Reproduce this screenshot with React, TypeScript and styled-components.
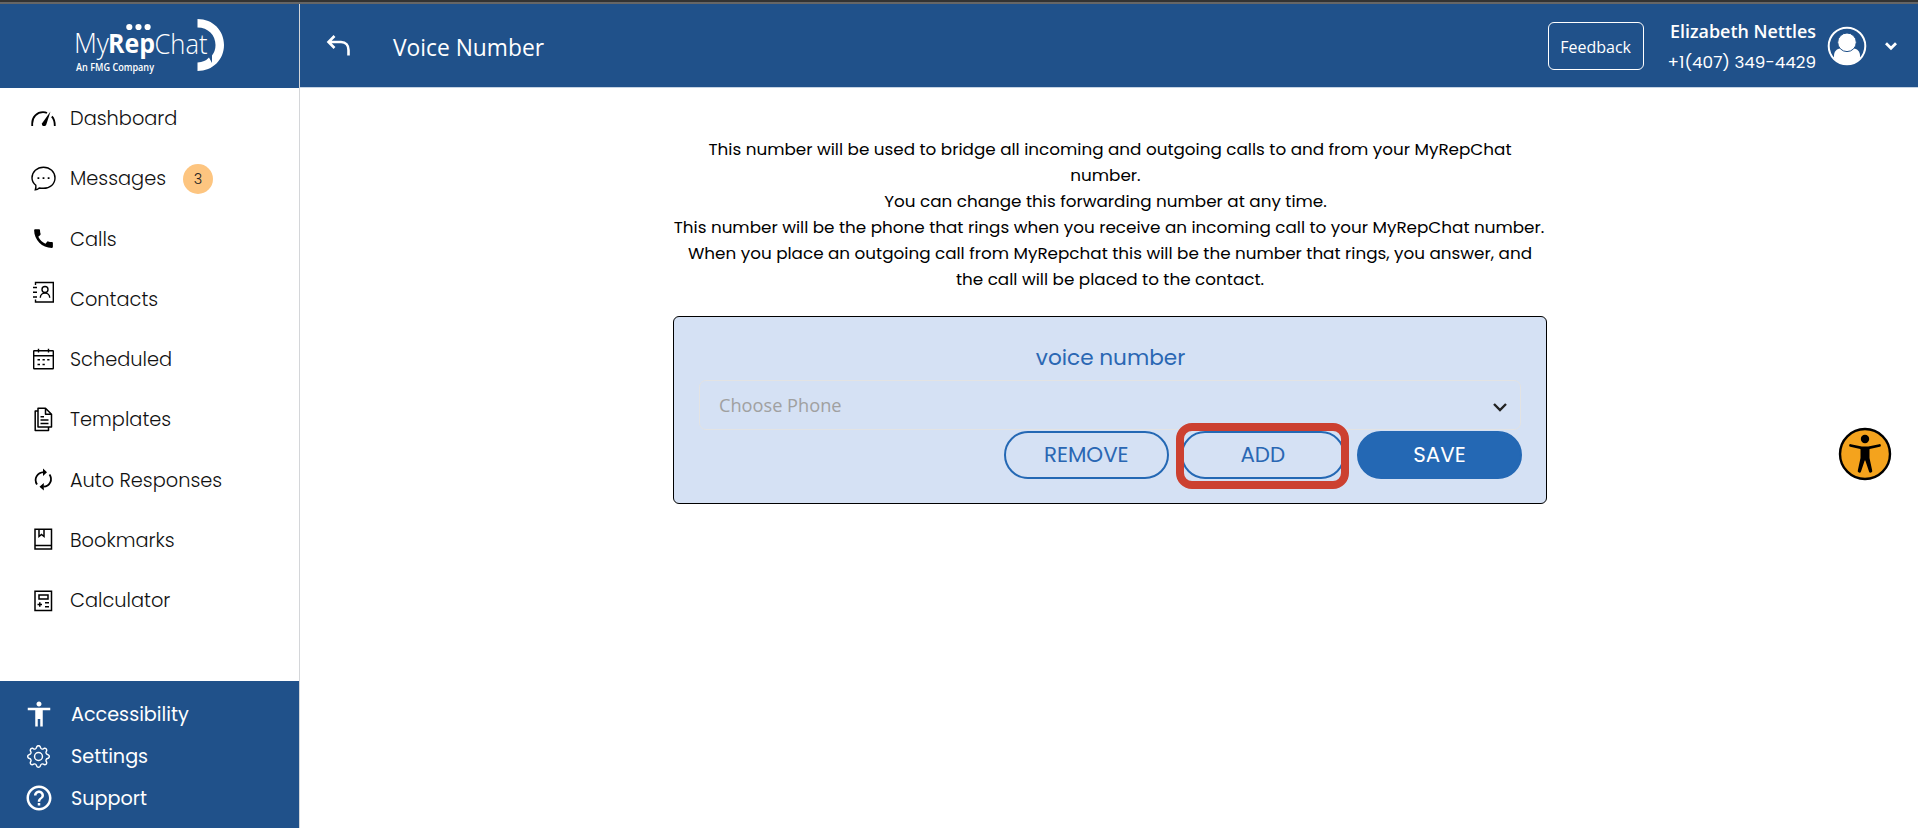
import React, { useState } from "react";
import styled, { createGlobalStyle } from "styled-components";
import { MdAccessibility, MdCall, MdHelpOutline } from "react-icons/md";
import { BsGear } from "react-icons/bs";

const geometric = `"Poppins", "Inter", sans-serif`;
const humanist = `"Segoe UI", "Open Sans", sans-serif`;

const GlobalStyle = createGlobalStyle`
    * {
        box-sizing: border-box;
    }

    body {
        margin: 0;
        background: #fff;
        font-family: ${geometric};
        overflow: hidden;
    }
`;

const Page = styled.div`
    display: flex;
    flex-direction: column;
    height: 100vh;
    border-top: 2px solid #333;
`;

const Body = styled.div`
    display: flex;
    flex: 1;
    min-height: 0;
    border-top: 2px solid #666;
`;

const Sidebar = styled.aside`
    display: flex;
    flex-direction: column;
    width: 300px;
    flex-shrink: 0;
    border-right: 1px solid #d4d6d9;
`;

const LogoWrapper = styled.div`
    height: 84px;
    background: #20518a;
`;

const Nav = styled.nav`
    display: flex;
    flex-direction: column;
    flex: 1;
`;

const NavItem = styled.a`
    display: flex;
    align-items: center;
    height: 60.25px;
    padding-left: 31px;
    color: #111;
    cursor: pointer;
`;

const NavIcon = styled.span<{ $raise?: number }>`
    display: flex;
    width: 25px;
    height: 25px;
    margin-right: 14px;
    margin-top: ${({ $raise }) => ($raise ? -$raise * 2 : 0)}px;
    color: #000;
`;

const NavLabel = styled.span`
    margin-top: 2px;
    font-size: 19.35px;
    font-weight: 300;
    line-height: 28px;
`;

const Badge = styled.span`
    display: flex;
    align-items: center;
    justify-content: center;
    width: 30px;
    height: 30px;
    margin-top: 2px;
    margin-left: 17px;
    border-radius: 50%;
    background: #fdc580;
    color: #222;
    font-size: 14.5px;
    font-weight: 300;
`;

const SidebarFooter = styled.div`
    height: 147px;
    padding: 12px 0 0 26px;
    background: #20518a;
`;

const FooterItem = styled.a`
    display: flex;
    align-items: center;
    height: 42px;
    color: #fff;
    cursor: pointer;
`;

const FooterIcon = styled.span`
    display: flex;
    align-items: center;
    justify-content: center;
    width: 25px;
    height: 30px;
    margin-right: 20px;

    svg {
        flex-shrink: 0;
    }
`;

const FooterLabel = styled.span`
    font-size: 19.2px;
    font-weight: 400;
`;

const Content = styled.div`
    display: flex;
    flex-direction: column;
    flex: 1;
`;

const Header = styled.header`
    display: flex;
    align-items: center;
    height: 84px;
    padding: 0 21px 0 26px;
    border-bottom: 1px solid #c5d3e3;
    background: #20518a;
    color: #fff;
`;

const BackButton = styled.button`
    display: flex;
    width: 26px;
    height: 26px;
    padding: 0;
    margin-right: 41px;
    border: 0;
    background: none;
    color: #fff;
    cursor: pointer;
`;

const Title = styled.h1`
    flex: 1;
    margin: 4px 0 0;
    font-family: ${humanist};
    font-size: 22.8px;
    font-weight: 400;
`;

const FeedbackButton = styled.button`
    width: 96px;
    height: 48px;
    padding: 2px 0 0;
    margin-right: 24px;
    border: 1px solid #fff;
    border-radius: 6px;
    background: none;
    color: #fff;
    font-family: ${humanist};
    font-size: 16px;
    cursor: pointer;
`;

const User = styled.div`
    padding-top: 3px;
    text-align: right;
    white-space: nowrap;
`;

const UserName = styled.div`
    font-family: ${humanist};
    font-size: 17.9px;
    font-weight: 600;
    line-height: 30px;
`;

const UserPhone = styled.div`
    font-size: 16.8px;
    line-height: 32px;
`;

const Avatar = styled.div`
    display: flex;
    width: 40px;
    height: 40px;
    margin-left: 11px;
    margin-right: 18px;
`;

const HeaderChevron = styled.div`
    display: flex;
    width: 12px;
`;

const Main = styled.main`
    display: flex;
    flex-direction: column;
    align-items: center;
    padding: 48px 0 0 2px;
`;

const Description = styled.div`
    width: 874px;
    margin-bottom: 24px;
`;

const DescriptionLine = styled.div<{ $trailing?: number }>`
    padding-right: ${({ $trailing }) => $trailing || 0}px;
    color: #000;
    font-size: 16.8px;
    font-weight: 400;
    line-height: 26px;
    text-align: center;
    white-space: nowrap;
`;

const Card = styled.section`
    width: 874px;
    height: 188px;
    padding: 23px 24px 0 25px;
    border: 1px solid #000;
    border-radius: 6px;
    background: #d5e1f4;
`;

const CardTitle = styled.h2`
    margin: 0 0 4px;
    color: #2a67b3;
    font-size: 21.6px;
    font-weight: 400;
    line-height: 36px;
    text-align: center;
`;

const PhoneSelect = styled.div`
    display: flex;
    align-items: center;
    justify-content: space-between;
    height: 50px;
    padding: 0 13px 0 19px;
    margin-right: 1px;
    border: 1px solid #e3e3e3;
    border-radius: 7px;
    color: #a0a0a0;
    font-family: ${humanist};
    font-size: 18.2px;

    svg {
        margin-top: 4px;
    }
`;

const ButtonRow = styled.div`
    display: flex;
    justify-content: flex-end;
    gap: 12px;
    margin-top: 1px;
`;

const ActionButton = styled.button<{ $filled?: boolean }>`
    width: ${({ $filled }) => ($filled ? 165 : 164.5)}px;
    height: 48px;
    padding: 0 0 1px;
    border: 2px solid #2468b4;
    border-radius: 24px;
    background: ${({ $filled }) => ($filled ? "#2468b4" : "transparent")};
    color: ${({ $filled }) => ($filled ? "#fff" : "#2a67b3")};
    font-family: ${geometric};
    font-size: 21.4px;
    font-weight: 400;
    cursor: pointer;
`;

const Highlighted = styled.div`
    position: relative;
    display: flex;

    &::after {
        content: "";
        position: absolute;
        inset: -8px -4px -10px -5px;
        border: 8px solid #cc4030;
        border-radius: 16px;
        pointer-events: none;
    }
`;

const AccessibilityWidget = styled.button`
    position: fixed;
    right: 26px;
    top: 427px;
    width: 54px;
    height: 54px;
    padding: 0;
    border: 0;
    background: none;
    cursor: pointer;
`;

const Logo: React.FC = () => (
    <svg width="299" height="84" viewBox="0 4 299 84" fill="#fff" fontFamily={humanist}>
        <circle cx="129.3" cy="27" r="3.1" />
        <circle cx="138.5" cy="27" r="3.1" />
        <circle cx="147.6" cy="27" r="3.1" />
        <text x="74" y="53" fontSize="27" fontWeight="300" textLength="35" lengthAdjust="spacingAndGlyphs">My</text>
        <text x="108" y="53" fontSize="27" fontWeight="700" textLength="47" lengthAdjust="spacingAndGlyphs">Rep</text>
        <text x="154.5" y="53.5" fontSize="27" fontWeight="300" textLength="53" lengthAdjust="spacingAndGlyphs">Chat</text>
        <text x="76" y="70.5" fontSize="10" fontWeight="600" textLength="78" lengthAdjust="spacingAndGlyphs">An FMG Company</text>
        <path d="M197.5 19C213 19 224 30.500 224 45C224 59.500 213 71 197.500 71V62.500Q205 62 209 57.500L212 63V55.500Q215.500 51 215.500 45C215.500 35 208 27.500 197.500 27.500Z" />
    </svg>
);

const DashboardIcon = () => (
    <svg width="25" height="25" viewBox="0 0 25 25" fill="none" stroke="currentColor" strokeWidth="1.8">
        <path d="M1.200 20V17.500C1.200 11 6 6.200 12 6.200C13.700 6.200 15 6.500 16 7M20.800 10.500Q23.800 13.500 23.800 20" />
        <path d="M19.500 5.500L15.300 18.600C14.400 21.200 10 20.200 11.100 17.200Z" fill="currentColor" stroke="none" />
    </svg>
);

const MessagesIcon = () => (
    <svg width="25" height="25" viewBox="0 0 25 25" fill="none" stroke="currentColor" strokeWidth="1.400">
        <path d="M4.800 19.200C2.500 17.300 1 14.900 1 12C1 6 6 1.200 12.500 1.200S24 6 24 12S19 22.300 12.500 22.300Q10.300 22.300 8.200 22Q6.500 23.700 4.300 23.800Q5.200 21.800 4.800 19.200Z" />
        <path d="M6.500 12.200H8.300M11.600 12.200H13.400M16.700 12.200H18.500" strokeWidth="1.800" />
    </svg>
);

const ContactsIcon = () => (
    <svg width="25" height="25" viewBox="0 0 25 25" fill="none" stroke="currentColor" strokeWidth="1.400">
        <path d="M4.500 5V2.500H22.300V22H4.500V19.500M2 7.500H6M2 12.200H6M2 17H6" />
        <circle cx="14" cy="9.500" r="3" />
        <path d="M9.300 17.800C9.300 11.500 18.700 11.500 18.700 17.800" />
    </svg>
);

const ScheduledIcon = () => (
    <svg width="25" height="25" viewBox="0 0 25 25" fill="none" stroke="currentColor" strokeWidth="1.400">
        <rect x="2.700" y="3.700" width="19.600" height="18" rx="0.500" />
        <path d="M3 8.700H22M7.500 1.700V5.500M17.500 1.700V5.500" />
        <path d="M6.500 12.800H9M11.500 12.800H13.800M16.200 12.800H18.500M6.500 17.500H9M11.500 17.500H13.800" strokeWidth="1.500" />
    </svg>
);

const TemplatesIcon = () => (
    <svg width="25" height="25" viewBox="0 0 25 25" fill="none" stroke="currentColor" strokeWidth="1.500" strokeLinejoin="round">
        <path d="M7 1.300H14.500L20.500 7.300V20H7ZM14.500 1.500V7.300H20.500M7 4H4.200V23.400H17.500V20M9.500 9.700H13M9.500 13H17.500M9.500 16.500H17.500" />
    </svg>
);

const AutoResponsesIcon = () => (
    <svg width="25" height="25" viewBox="0 0 25 25" fill="none" stroke="currentColor" strokeWidth="1.800">
        <path d="M6 17.500C2.500 12 6 5.500 13 5.200M18.500 7.500C22 12.500 19 19.500 12.500 19.700" />
        <path d="M12 1.500L16 5.200L12 9ZM12.800 16L8.500 19.800L12.800 23.500Z" fill="currentColor" stroke="none" />
    </svg>
);

const BookmarksIcon = () => (
    <svg width="25" height="25" viewBox="0 0 25 25" fill="none" stroke="currentColor" strokeWidth="1.500">
        <path d="M4 2.300H20.500V22H4ZM4 18.500H20.500M8 2.500V9.500L10.500 7.500L13 9.500V2.500" />
    </svg>
);

const CalculatorIcon = () => (
    <svg width="25" height="25" viewBox="0 0 25 25" fill="none" stroke="currentColor" strokeWidth="1.500">
        <path d="M4 3.300H20.500V22.500H4ZM8 7H17V11H8ZM6.500 16.500H11M8.800 14.300V18.700M14 14.700H18M14 18.700H18" />
    </svg>
);

const menuList = [
    { name: "Dashboard", icon: <DashboardIcon /> },
    { name: "Messages", icon: <MessagesIcon />, count: 3 },
    { name: "Calls", icon: <MdCall size={25} /> },
    { name: "Contacts", icon: <ContactsIcon />, raise: 6.5 },
    { name: "Scheduled", icon: <ScheduledIcon /> },
    { name: "Templates", icon: <TemplatesIcon /> },
    { name: "Auto Responses", icon: <AutoResponsesIcon /> },
    { name: "Bookmarks", icon: <BookmarksIcon /> },
    { name: "Calculator", icon: <CalculatorIcon /> },
];

const footerList = [
    { name: "Accessibility", icon: <MdAccessibility size={30} /> },
    { name: "Settings", icon: <BsGear size={23} /> },
    { name: "Support", icon: <MdHelpOutline size={30} /> },
];

const descriptionList = [
    { text: "This number will be used to bridge all incoming and outgoing calls to and from your MyRepChat" },
    { text: "number.", trailing: 9 },
    { text: "You can change this forwarding number at any time.", trailing: 9 },
    { text: "This number will be the phone that rings when you receive an incoming call to your MyRepChat number.", trailing: 2 },
    { text: "When you place an outgoing call from MyRepchat this will be the number that rings, you answer, and" },
    { text: "the call will be placed to the contact." },
];

const App: React.FC = () => {
    const [phone] = useState<string>("");

    return (
        <Page>
            <GlobalStyle />
            <Body>
                <Sidebar>
                    <LogoWrapper>
                        <Logo />
                    </LogoWrapper>
                    <Nav>
                        {menuList.map((menu) => (
                            <NavItem key={menu.name}>
                                <NavIcon $raise={menu.raise}>{menu.icon}</NavIcon>
                                <NavLabel>{menu.name}</NavLabel>
                                {menu.count && <Badge>{menu.count}</Badge>}
                            </NavItem>
                        ))}
                    </Nav>
                    <SidebarFooter>
                        {footerList.map((item) => (
                            <FooterItem key={item.name}>
                                <FooterIcon>{item.icon}</FooterIcon>
                                <FooterLabel>{item.name}</FooterLabel>
                            </FooterItem>
                        ))}
                    </SidebarFooter>
                </Sidebar>
                <Content>
                    <Header>
                        <BackButton aria-label="Back">
                            <svg width="26" height="26" viewBox="0 0 26 26" fill="none" stroke="currentColor" strokeWidth="2.600">
                                <path d="M8.500 3L2.500 9L8.500 15M2.500 9H15C20 9 22.500 12.500 22.500 17V22.500" />
                            </svg>
                        </BackButton>
                        <Title>Voice Number</Title>
                        <FeedbackButton>Feedback</FeedbackButton>
                        <User>
                            <UserName>Elizabeth Nettles</UserName>
                            <UserPhone>+1(407) 349-4429</UserPhone>
                        </User>
                        <Avatar>
                            <svg width="40" height="40" viewBox="0 0 40 40">
                                <circle cx="20" cy="20" r="18.300" fill="none" stroke="#fff" strokeWidth="2" />
                                <path d="M7 32V30C7 25 10 22.500 14 22.500H26C30 22.500 33 25 33 30V32Q27.500 38.500 20 38.500T7 32Z" fill="#fff" />
                                <circle cx="20" cy="16.300" r="9.300" fill="#fff" stroke="#20518a" strokeWidth="1" />
                            </svg>
                        </Avatar>
                        <HeaderChevron>
                            <svg width="12" height="10" viewBox="0 0 12 10" fill="none" stroke="#fff" strokeWidth="2.800">
                                <path d="M1 2.200L6 7.200L11 2.200" />
                            </svg>
                        </HeaderChevron>
                    </Header>
                    <Main>
                        <Description>
                            {descriptionList.map((line) => (
                                <DescriptionLine key={line.text} $trailing={line.trailing}>
                                    {line.text}
                                </DescriptionLine>
                            ))}
                        </Description>
                        <Card>
                            <CardTitle>voice number</CardTitle>
                            <PhoneSelect>
                                <span>{phone || "Choose Phone"}</span>
                                <svg width="14" height="10" viewBox="0 0 14 10" fill="none" stroke="#222" strokeWidth="2.400">
                                    <path d="M1 2L7 8L13 2" />
                                </svg>
                            </PhoneSelect>
                            <ButtonRow>
                                <ActionButton>REMOVE</ActionButton>
                                <Highlighted>
                                    <ActionButton>ADD</ActionButton>
                                </Highlighted>
                                <ActionButton $filled>SAVE</ActionButton>
                            </ButtonRow>
                        </Card>
                    </Main>
                </Content>
            </Body>
            <AccessibilityWidget aria-label="Accessibility">
                <svg width="54" height="54" viewBox="0 0 54 54">
                    <circle cx="27" cy="27" r="25" fill="#f4a31d" stroke="#000" strokeWidth="2.400" />
                    <circle cx="27" cy="12" r="4.200" />
                    <path d="M12.500 18.500L23.500 20.800H30.500L41.500 18.500" fill="none" stroke="#000" strokeWidth="2.800" strokeLinecap="round" />
                    <path d="M22.500 20H31.500V31L34.200 43.500A1.600 1.600 0 0 1 31 44.500L27.300 33.500H26.700L23 44.500A1.600 1.600 0 0 1 19.800 43.500L22.500 31Z" />
                </svg>
            </AccessibilityWidget>
        </Page>
    );
};

export default App;
